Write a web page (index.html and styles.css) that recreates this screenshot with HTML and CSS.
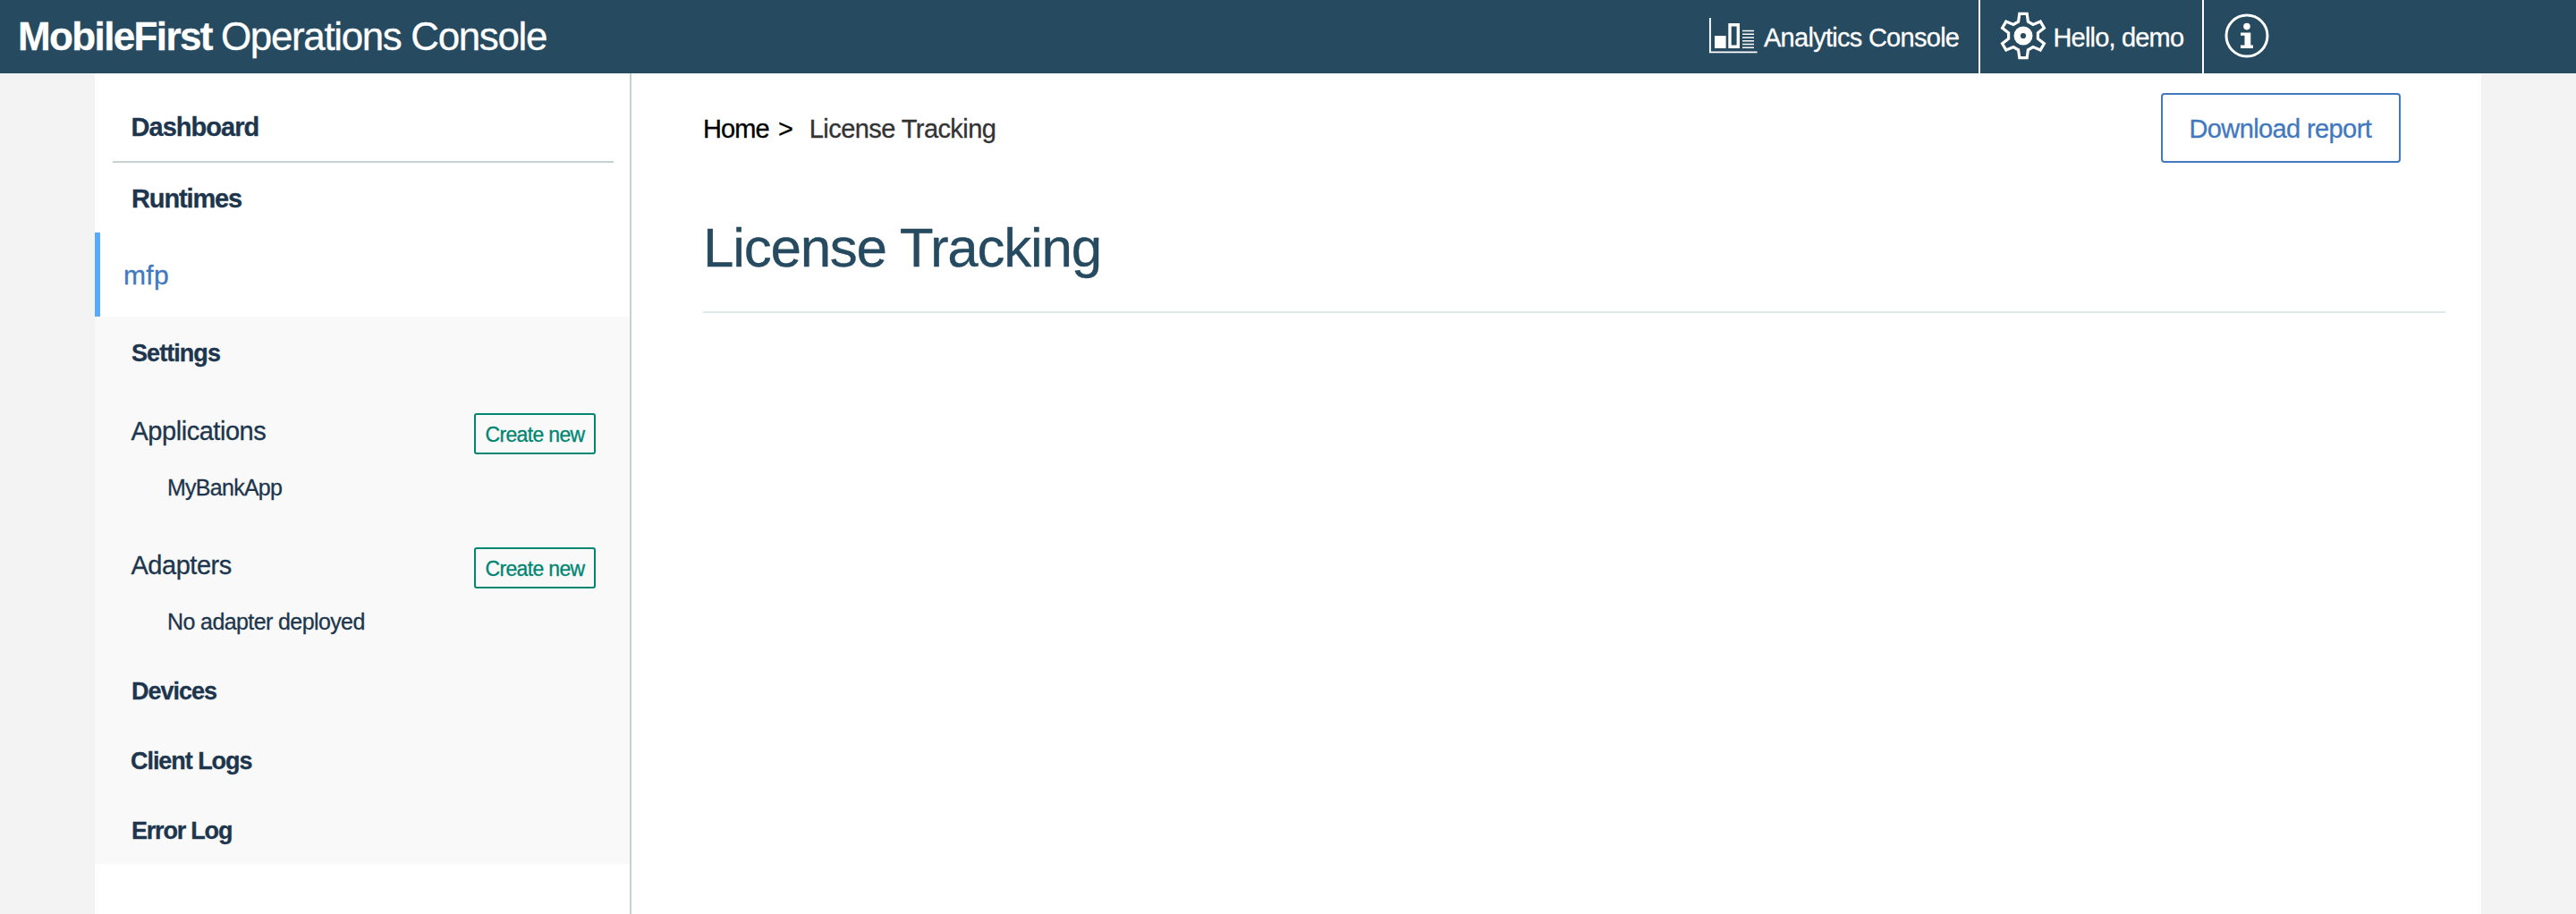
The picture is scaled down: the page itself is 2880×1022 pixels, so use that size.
FILE: index.html
```html
<!DOCTYPE html>
<html lang="en">
<head>
<meta charset="utf-8">
<title>MobileFirst Operations Console</title>
<link rel="stylesheet" href="styles.css">
</head>
<body>
<header class="topbar">
  <div class="brand"><strong class="brand-name">MobileFirst</strong><span class="brand-sub">Operations Console</span></div>
  <nav class="topnav">
    <a class="topnav-item analytics">
      <svg class="icon-chart" width="56" height="42" viewBox="0 0 56 42" fill="none">
        <path d="M1.9 1V39.4H54.6" stroke="#fff" stroke-width="1.9"/>
        <path d="M7 21H19.6V35H7z" fill="#fff"/>
        <path d="M24 8.7H33.3V33.3H24z" stroke="#fff" stroke-width="3.4"/>
        <path d="M38 15.6H51M38 19.3H51M38 23H51M38 26.8H51M38 30.6H51M38 34.3H51" stroke="#fff" stroke-width="1.5"/>
      </svg>
      <span class="analytics-label">Analytics Console</span>
    </a>
    <a class="topnav-item user">
      <svg class="icon-gear" width="54" height="54" viewBox="-27 -27 54 54" fill="none" stroke="#fff">
        <path stroke-width="3.2" d="M-4.2-24.6L4.2-24.6L5.4-15.8L11-12.6L19.2-15.9L23.4-8.7L16.4-3.2L16.4 3.2L23.4 8.7L19.2 15.9L11 12.6L5.4 15.8L4.2 24.6L-4.2 24.6L-5.4 15.8L-11 12.6L-19.2 15.9L-23.4 8.7L-16.4 3.2L-16.4-3.2L-23.4-8.7L-19.2-15.9L-11-12.6L-5.4-15.8Z"/>
        <circle r="6.8" stroke-width="7.4"/>
      </svg>
      <span class="user-label">Hello, demo</span>
    </a>
    <a class="topnav-item info">
      <svg class="icon-info" width="50" height="50" viewBox="-25 -25 50 50">
        <circle r="23" fill="none" stroke="#fff" stroke-width="3"/>
        <circle cy="-10.4" r="3.8" fill="#fff"/>
        <path fill="#fff" d="M-7-3.6H4.3V10.6H7V14H-7V10.6H-2.5V-.2H-7z"/>
      </svg>
    </a>
  </nav>
</header>
<div class="page">
  <aside class="sidebar">
    <a class="side-head dashboard">Dashboard</a>
    <div class="side-head runtimes">Runtimes</div>
    <a class="runtime-active">mfp</a>
    <div class="submenu">
      <a class="sub-link">Settings</a>
      <section class="group">
        <div class="group-row"><span class="group-name">Applications</span><button class="create">Create new</button></div>
        <a class="group-item app-item">MyBankApp</a>
      </section>
      <section class="group">
        <div class="group-row"><span class="group-name">Adapters</span><button class="create">Create new</button></div>
        <div class="group-item">No adapter deployed</div>
      </section>
      <a class="sub-link devices">Devices</a>
      <a class="sub-link client-logs">Client Logs</a>
      <a class="sub-link error-log">Error Log</a>
    </div>
  </aside>
  <main class="main">
    <div class="toolbar">
      <div class="crumbs"><a class="crumb-home">Home</a><span class="crumb-sep">&gt;</span><span class="crumb-here">License Tracking</span></div>
      <button class="download">Download report</button>
    </div>
    <h1 class="title">License Tracking</h1>
  </main>
</div>
</body>
</html>
```
FILE: styles.css
```css
* { box-sizing: border-box; }
body {
  margin: 0;
  height: 1022px;
  overflow: hidden;
  display: flex;
  flex-direction: column;
  background: #f3f3f3;
  font-family: "Liberation Sans", Arial, sans-serif;
  font-size: 29px;
  line-height: 32px;
  -webkit-text-stroke: 0.3px currentColor;
}
button { font-family: inherit; margin: 0; background: transparent; white-space: nowrap; text-align: left; }

/* top bar */
.topbar {
  flex: none;
  height: 82px;
  display: flex;
  justify-content: space-between;
  background: #264a60;
  color: #fff;
}
.brand { display: flex; padding: 16px 0 0 20px; font-size: 44px; line-height: 49px; white-space: nowrap; }
.brand-name { width: 227px; letter-spacing: -1.62px; }
.brand-sub { letter-spacing: -1.38px; }
.topnav { display: flex; padding-right: 342px; }
.topnav-item { display: flex; align-items: flex-start; white-space: nowrap; }
.analytics { width: 304px; border-right: 2px solid #fff; }
.icon-chart { margin: 19px 6px 0 0; }
.analytics-label { margin-top: 26px; letter-spacing: -0.72px; }
.user { width: 250px; padding-left: 21px; border-right: 2px solid #fff; }
.icon-gear { margin: 13px 6.5px 0 0; }
.user-label { margin-top: 26px; letter-spacing: -0.82px; }
.info { width: 74px; padding-left: 23px; }
.icon-info { margin-top: 15px; }

/* page body */
.page { flex: 1; display: flex; margin: 0 106px; background: #fff; }
.sidebar { flex: none; width: 600px; border-right: 2px solid #c8d2d2; color: #1d364d; }
.side-head { display: block; font-weight: bold; }
.dashboard {
  margin: 0 18px 0 20px;
  padding: 44px 0 22px 20.5px;
  border-bottom: 2px solid #c8d2d2;
  letter-spacing: -0.97px;
}
.runtimes { padding: 24px 0 22px 41px; letter-spacing: -1.14px; }
.runtime-active {
  display: block;
  height: 94px;
  padding: 31px 0 0 26px;
  border-left: 6px solid #5aaafa;
  color: #4178be;
  font-size: 30px;
  line-height: 33px;
  letter-spacing: 0.3px;
}
.submenu { height: 612px; padding-top: 26px; background: #f9f9f9; }
.sub-link {
  display: block;
  padding-left: 41px;
  font-size: 27px;
  line-height: 30px;
  font-weight: bold;
  letter-spacing: -0.94px;
}
.group { margin-top: 52px; }
.group + .group { margin-top: 53px; }
.group-row { display: flex; justify-content: space-between; padding: 0 38px 0 40.5px; }
.group-name { padding-top: 4px; letter-spacing: -0.47px; }
.group-item {
  display: block;
  margin-top: 23px;
  padding-left: 81px;
  font-size: 25px;
  line-height: 28px;
  letter-spacing: -0.6px;
}
.app-item { letter-spacing: -0.73px; }
.create {
  width: 136px;
  height: 46px;
  padding: 9px 0 7px 10.5px;
  border: 2px solid #008571;
  border-radius: 3px;
  color: #008571;
  font-size: 23px;
  line-height: 26px;
  letter-spacing: -0.667px;
}
.devices { margin-top: 49px; letter-spacing: -1.01px; }
.client-logs { margin-top: 48px; padding-left: 40px; letter-spacing: -1.05px; }
.error-log { margin-top: 48px; letter-spacing: -1.2px; }

/* content */
.main { flex: 1; padding: 22px 40px 0 80px; }
.toolbar { display: flex; justify-content: space-between; padding-right: 50px; }
.crumbs { display: flex; padding-top: 24px; white-space: nowrap; color: #000; }
.crumb-home { width: 84px; letter-spacing: -0.91px; }
.crumb-sep { width: 34.8px; }
.crumb-here { color: #333; letter-spacing: -0.57px; }
.download {
  width: 268px;
  height: 78px;
  padding: 22px 0 22px 29.5px;
  border: 2px solid #4178be;
  border-radius: 4px;
  color: #4178be;
  font-size: 29px;
  line-height: 32px;
  letter-spacing: -0.61px;
}
.title {
  margin: 60px 0 0;
  padding-bottom: 37px;
  border-bottom: 2px solid #dfe9e9;
  color: #264a60;
  font-size: 62px;
  line-height: 69px;
  font-weight: normal;
  letter-spacing: -1.27px;
}
```
